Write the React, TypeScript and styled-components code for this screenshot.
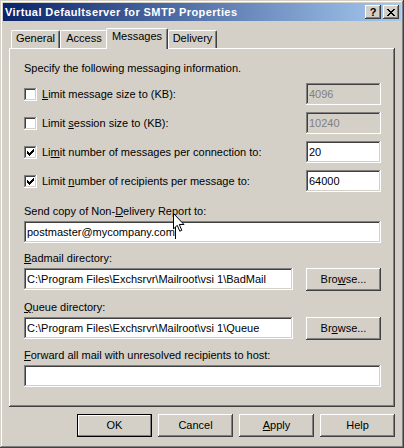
import styled, { createGlobalStyle } from 'styled-components'

const palette = {
  face: '#d4d0c8',
  light: '#ffffff',
  shadow: '#808080',
  dark: '#404040',
  titleFrom: '#0a246a',
  titleTo: '#a6caf0',
}

const raised = `box-shadow: inset -1px -1px ${palette.dark}, inset 1px 1px ${palette.light}, inset -2px -2px ${palette.shadow};`
const sunken = `box-shadow: inset -1px -1px ${palette.light}, inset 1px 1px ${palette.shadow}, inset -2px -2px ${palette.face}, inset 2px 2px ${palette.dark};`

const GlobalStyle = createGlobalStyle`
  html, body {
    margin: 0;
    padding: 0;
    background: ${palette.face};
  }
  body {
    font-family: "Liberation Sans", Arial, sans-serif;
    font-size: 11px;
    color: #000;
  }
`

const Window = styled.div`
  position: relative;
  box-sizing: border-box;
  width: 404px;
  height: 448px;
  padding: 3px;
  display: flex;
  flex-direction: column;
  background: ${palette.face};
  box-shadow: inset -1px -1px ${palette.dark}, inset 1px 1px ${palette.face},
    inset -2px -2px ${palette.shadow}, inset 2px 2px ${palette.light};
`

const TitleBar = styled.div`
  height: 18px;
  display: flex;
  align-items: center;
  padding: 0 2px 0 2px;
  background: linear-gradient(to right, ${palette.titleFrom}, ${palette.titleTo});
`

const TitleText = styled.div`
  flex: 1;
  color: #fff;
  font-weight: bold;
  font-size: 11px;
  letter-spacing: 0.4px;
  line-height: 18px;
  white-space: nowrap;
`

const CaptionButtons = styled.div`
  display: flex;
  gap: 2px;
`

const CaptionButton = styled.div`
  position: relative;
  width: 16px;
  height: 14px;
  box-sizing: border-box;
  background: ${palette.face};
  ${raised}
  display: flex;
  align-items: center;
  justify-content: center;
  font-weight: bold;
  font-size: 11px;
  line-height: 14px;
  padding-bottom: 1px;
`

const Body = styled.div`
  flex: 1;
  display: flex;
  flex-direction: column;
  padding: 7px 6px 0 6px;
`

const TabStrip = styled.div`
  height: 20px;
  display: flex;
  align-items: flex-end;
  padding-left: 2px;
`

const Tab = styled.div<{ $active?: boolean; $w: number }>`
  position: relative;
  z-index: ${({ $active }) => ($active ? 2 : 1)};
  box-sizing: border-box;
  width: ${({ $w }) => $w}px;
  height: ${({ $active }) => ($active ? 21 : 18)}px;
  margin-left: ${({ $active }) => ($active ? -2 : 0)}px;
  margin-bottom: ${({ $active }) => ($active ? -1 : 0)}px;
  padding-top: 1px;
  border-top: 1px solid ${palette.light};
  border-left: 1px solid ${palette.light};
  border-right: 1px solid ${palette.dark};
  border-radius: 2px 2px 0 0;
  box-shadow: inset -1px 0 ${palette.shadow};
  background: ${palette.face};
  text-align: center;
  line-height: 13px;
`

const Panel = styled.div`
  box-sizing: border-box;
  height: 359px;
  padding: 14px 14px 0 15px;
  display: flex;
  flex-direction: column;
  ${`box-shadow: inset -1px -1px ${palette.dark}, inset 1px 1px ${palette.light}, inset -2px -2px ${palette.shadow};`}
`

const Text = styled.div<{ $mt?: number }>`
  line-height: 13px;
  margin-top: ${({ $mt }) => $mt ?? 0}px;
  white-space: nowrap;
`

const OptionRow = styled.div<{ $mt: number }>`
  display: flex;
  align-items: center;
  justify-content: space-between;
  height: 22px;
  margin-top: ${({ $mt }) => $mt}px;
`

const CheckLabel = styled.label`
  display: flex;
  align-items: center;
  gap: 5px;
  line-height: 13px;
`

const CheckBox = styled.span`
  width: 13px;
  height: 13px;
  background: #fff;
  ${sunken}
  display: block;
  flex-shrink: 0;
`

const Field = styled.div<{ $w: number; $disabled?: boolean }>`
  box-sizing: border-box;
  width: ${({ $w }) => $w}px;
  height: 22px;
  padding: 0 3px;
  display: flex;
  align-items: center;
  white-space: nowrap;
  line-height: 13px;
  background: ${({ $disabled }) => ($disabled ? palette.face : '#fff')};
  color: ${({ $disabled }) => ($disabled ? palette.shadow : '#000')};
  ${sunken}
`

const FieldRow = styled.div`
  display: flex;
  justify-content: space-between;
  align-items: flex-start;
  height: 23px;
  margin-top: 3px;
`

const Caret = styled.span`
  display: inline-block;
  width: 1px;
  height: 13px;
  background: #000;
`

const Button = styled.div<{ $default?: boolean }>`
  box-sizing: border-box;
  width: 75px;
  height: 23px;
  display: flex;
  align-items: center;
  justify-content: center;
  background: ${palette.face};
  line-height: 13px;
  ${({ $default }) =>
    $default
      ? `border: 1px solid #000; box-shadow: inset -1px -1px ${palette.shadow}, inset 1px 1px ${palette.light};`
      : raised}
`

const ButtonRow = styled.div`
  display: flex;
  justify-content: flex-end;
  gap: 6px;
  margin-top: 7px;
`

const Pointer = styled.svg`
  position: absolute;
  left: 173px;
  top: 213px;
  z-index: 5;
`

const CheckMark = () => {
  const cols: [number, number][] = [[3, 5], [4, 6], [5, 7], [6, 6], [7, 5], [8, 4], [9, 3]]
  return (
    <svg width="13" height="13" viewBox="0 0 13 13" shapeRendering="crispEdges">
      {cols.map(([x, y]) => (
        <rect key={x} x={x} y={y} width="1" height="3" fill="#000" />
      ))}
    </svg>
  )
}

const CloseGlyph = () => {
  const rows = [[0, 1, 6, 7], [1, 2, 5, 6], [2, 3, 4, 5], [3, 4], [2, 3, 4, 5], [1, 2, 5, 6], [0, 1, 6, 7]]
  return (
    <svg width="8" height="7" viewBox="0 0 8 7" shapeRendering="crispEdges" style={{ marginTop: 1 }}>
      {rows.flatMap((xs, y) => xs.map((x) => <rect key={`${x}-${y}`} x={x} y={y} width="1" height="1" fill="#000" />))}
    </svg>
  )
}

const Check = ({ checked, children }: { checked?: boolean; children: React.ReactNode }) => (
  <CheckLabel>
    <CheckBox>{checked && <CheckMark />}</CheckBox>
    <span>{children}</span>
  </CheckLabel>
)

export default function App() {
  return (
    <>
      <GlobalStyle />
      <Window>
        <TitleBar>
          <TitleText>Virtual Defaultserver for SMTP Properties</TitleText>
          <CaptionButtons>
            <CaptionButton>?</CaptionButton>
            <CaptionButton><CloseGlyph /></CaptionButton>
          </CaptionButtons>
        </TitleBar>
        <Body>
          <TabStrip>
            <Tab $w={49}>General</Tab>
            <Tab $w={48}>Access</Tab>
            <Tab $w={62} $active>Messages</Tab>
            <Tab $w={49}>Delivery</Tab>
          </TabStrip>
          <Panel>
            <Text>Specify the following messaging information.</Text>
            <OptionRow $mt={8}>
              <Check><u>L</u>imit message size to (KB):</Check>
              <Field $w={75} $disabled>4096</Field>
            </OptionRow>
            <OptionRow $mt={7}>
              <Check>Limit <u>s</u>ession size to (KB):</Check>
              <Field $w={75} $disabled>10240</Field>
            </OptionRow>
            <OptionRow $mt={7}>
              <Check checked>Li<u>m</u>it number of messages per connection to:</Check>
              <Field $w={75}>20</Field>
            </OptionRow>
            <OptionRow $mt={7}>
              <Check checked>Limit <u>n</u>umber of recipients per message to:</Check>
              <Field $w={75}>64000</Field>
            </OptionRow>

            <Text $mt={13}>Send copy of Non-<u>D</u>elivery Report to:</Text>
            <FieldRow>
              <Field $w={357}>postmaster@mycompany.com<Caret /></Field>
            </FieldRow>

            <Text $mt={8}><u>B</u>admail directory:</Text>
            <FieldRow>
              <Field $w={269}>C:\Program Files\Exchsrvr\Mailroot\vsi 1\BadMail</Field>
              <Button>Bro<u>w</u>se...</Button>
            </FieldRow>

            <Text $mt={10}><u>Q</u>ueue directory:</Text>
            <FieldRow>
              <Field $w={269}>C:\Program Files\Exchsrvr\Mailroot\vsi 1\Queue</Field>
              <Button>Br<u>o</u>wse...</Button>
            </FieldRow>

            <Text $mt={9}><u>F</u>orward all mail with unresolved recipients to host:</Text>
            <FieldRow>
              <Field $w={357} />
            </FieldRow>
          </Panel>
          <ButtonRow>
            <Button $default>OK</Button>
            <Button>Cancel</Button>
            <Button><u>A</u>pply</Button>
            <Button>Help</Button>
          </ButtonRow>
        </Body>
        <Pointer width="12" height="19" viewBox="0 0 12 19">
          <polygon
            points="0.5,0.5 0.5,16 4.2,12.3 6.8,18.2 8.8,17.3 6.3,11.5 11,11.5"
            fill="#fff"
            stroke="#000"
            strokeWidth="1"
            strokeLinejoin="miter"
          />
        </Pointer>
      </Window>
    </>
  )
}
